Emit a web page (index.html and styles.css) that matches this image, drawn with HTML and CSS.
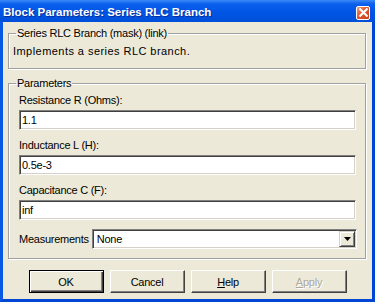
FILE: index.html
```html
<!DOCTYPE html>
<html lang="en">
  <head>
    <meta charset="UTF-8" />
    <title>Block Parameters: Series RLC Branch</title>
    <link rel="stylesheet" href="styles.css">
  </head>
  <body>
    <div class="window">
      <div class="titlebar">
        <span class="title">Block Parameters: Series RLC Branch</span>
        <span class="close-btn">
          <svg width="9" height="9" viewBox="0 0 9 9">
            <path d="M1.2 1.2 L7.8 7.8 M7.8 1.2 L1.2 7.8" stroke="#fff" stroke-width="2.1" stroke-linecap="square" />
          </svg>
        </span>
      </div>

      <div class="frame">
        <div class="client">
          <!-- Description du masque -->
          <fieldset class="group">
            <legend>Series RLC Branch (mask) (link)</legend>
            <p class="desc">Implements a series RLC branch.</p>
          </fieldset>

          <!-- Paramètres -->
          <fieldset class="group">
            <legend>Parameters</legend>
            <div class="params">
              <div class="param-label">Resistance R (Ohms):</div>
              <div class="edit">1.1</div>
              <div class="param-label">Inductance L (H):</div>
              <div class="edit">0.5e-3</div>
              <div class="param-label">Capacitance C (F):</div>
              <div class="edit">inf</div>

              <div class="measure-row">
                <span class="measure-label">Measurements</span>
                <div class="combo">
                  <span class="combo-value">None</span>
                  <span class="combo-btn">
                    <svg width="7" height="4" viewBox="0 0 7 4">
                      <path d="M0 0 H7 L3.5 4 Z" fill="#000" />
                    </svg>
                  </span>
                </div>
              </div>
            </div>
          </fieldset>

          <div class="buttons">
            <button class="btn btn-default">OK</button>
            <button class="btn">Cancel</button>
            <button class="btn"><u>H</u>elp</button>
            <button class="btn btn-disabled"><u>A</u>pply</button>
          </div>
        </div>
      </div>
    </div>
  </body>
</html>
```

FILE: styles.css
```css
:root {
  --xp-blue: #0055e5;
  --face: #ece9d8;
  --shadow: #808080;
  --dark: #404040;
  --light: #d4d0c8;
}

* {
  box-sizing: border-box;
  margin: 0;
  padding: 0;
}

body {
  font-family: "Liberation Sans", Arial, sans-serif;
  font-size: 11px;
  letter-spacing: -0.25px;
  color: #000;
  background: var(--xp-blue);
}

.window {
  width: 375px;
  height: 302px;
  display: flex;
  flex-direction: column;
}

/* Barre de titre XP */
.titlebar {
  height: 22px;
  display: flex;
  align-items: center;
  justify-content: space-between;
  padding: 0 5px 0 3px;
  background: linear-gradient(
    to bottom,
    #3d8af7 0%,
    #0a5fec 18%,
    #0055e5 55%,
    #004fd9 100%
  );
}

.title {
  color: #fff;
  font-weight: 700;
  font-size: 11.5px;
  letter-spacing: 0;
  padding-top: 2px;
  text-shadow: 1px 1px 0 #0a2d9a;
}

.close-btn {
  width: 14px;
  height: 14px;
  margin-top: 3px;
  display: flex;
  align-items: center;
  justify-content: center;
  border: 1px solid #fff;
  border-radius: 2px;
  background: linear-gradient(135deg, #f0a080 0%, #e0562e 45%, #c8401a 100%);
}

.frame {
  flex: 1;
  display: flex;
  border-left: 3px solid #0858e6;
  border-right: 3px solid #0046d5;
  border-bottom: 3px solid #0046d5;
}

.client {
  flex: 1;
  background: var(--face);
  padding: 5px 6px 0 5px;
  display: flex;
  flex-direction: column;
}

/* Cadres (group box) */
.group {
  border: 1px solid #a0a0a0;
  box-shadow: inset 1px 1px 0 #fff, 1px 1px 0 #fff;
  padding: 5px 9px 10px 4px;
}

.group + .group {
  margin-top: 8px;
  padding-top: 4px;
  padding-bottom: 9px;
}

.group legend {
  margin-left: 3px;
  padding: 0 1px;
  line-height: 13px;
}

.desc {
  line-height: 13px;
  letter-spacing: 0.45px;
}

.params {
  padding-left: 6px;
}

.param-label {
  line-height: 13px;
  margin-bottom: 3px;
}

.edit,
.combo {
  height: 20px;
  background: #fff;
  border: 1px solid;
  border-color: var(--shadow) #fff #fff var(--shadow);
  box-shadow: inset 1px 1px 0 var(--dark), inset -1px -1px 0 var(--light);
}

.edit {
  line-height: 18px;
  padding-left: 2px;
  margin-bottom: 9px;
}

.edit:last-of-type {
  margin-bottom: 7px;
}

.measure-row {
  display: flex;
  align-items: center;
}

.combo {
  flex: 1;
  margin-left: 3px;
  margin-right: -1px;
  display: flex;
  align-items: center;
  justify-content: space-between;
  padding: 1px;
}

.combo-value {
  padding-left: 3px;
  line-height: 16px;
}

.combo-btn {
  width: 16px;
  height: 16px;
  display: flex;
  align-items: center;
  justify-content: center;
  background: var(--face);
  border: 1px solid;
  border-color: var(--light) var(--dark) var(--dark) var(--light);
  box-shadow: inset 1px 1px 0 #fff, inset -1px -1px 0 var(--shadow);
}

/* Boutons */
.buttons {
  display: flex;
  justify-content: center;
  gap: 6px;
  margin-top: 11px;
  padding-left: 1px;
}

.btn {
  width: 75px;
  height: 23px;
  font-family: inherit;
  font-size: 11px;
  letter-spacing: -0.25px;
  color: #000;
  background: var(--face);
  border: 1px solid;
  border-color: #fff var(--dark) var(--dark) #fff;
  box-shadow: inset -1px -1px 0 var(--shadow);
}

.btn-default {
  border-color: #000;
  box-shadow: inset 1px 1px 0 #fff, inset -1px -1px 0 var(--dark),
    inset -2px -2px 0 var(--shadow);
}

.btn-disabled {
  color: #aca899;
  text-shadow: 1px 1px 0 #fff;
}
```
